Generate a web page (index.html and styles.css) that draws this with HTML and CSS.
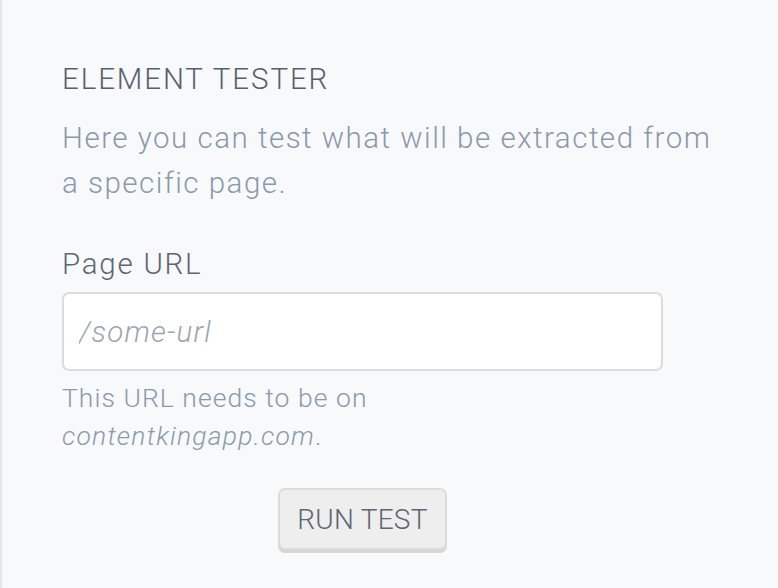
FILE: index.html
```html
<!DOCTYPE html>
<html>
<head>
<meta charset="utf-8">
<link rel="stylesheet" href="styles.css">
</head>
<body>
<div class="panel">
  <h2 class="title">ELEMENT TESTER</h2>
  <p class="desc">Here you can test what will be extracted from a specific page.</p>
  <label class="label" for="url">Page URL</label>
  <div class="field">
    <input id="url" class="input" type="text" placeholder="/some-url">
  </div>
  <p class="hint">This URL needs to be on<br><em>contentkingapp.com</em>.</p>
  <div class="actions">
    <button class="btn" type="button">RUN TEST</button>
  </div>
</div>
</body>
</html>
```

FILE: styles.css
```css
html, body {
  margin: 0;
  padding: 0;
  height: 100%;
}
body {
  background: #f8f9fb;
  font-family: Roboto, "Liberation Sans", sans-serif;
}
.panel {
  box-sizing: border-box;
  min-height: 100%;
  border-left: 2px solid #e6e7ea;
  padding: 59px 0 0 60px;
}
.title {
  margin: 0;
  font-size: 29.5px;
  font-weight: 300;
  line-height: 40px;
  letter-spacing: 1.9px;
  color: #56606d;
}
.desc {
  margin: 17px 0 0;
  width: 660px;
  font-size: 29.5px;
  font-weight: 300;
  line-height: 45px;
  letter-spacing: 1.5px;
  color: #8a99ab;
}
.label {
  display: block;
  margin-top: 38px;
  font-size: 29.5px;
  font-weight: 300;
  line-height: 40px;
  letter-spacing: 1.75px;
  color: #5d6672;
}
.field {
  margin-top: 8px;
  width: 601px;
}
.input {
  box-sizing: border-box;
  display: block;
  width: 100%;
  height: 79px;
  border: 2px solid #dcdcdc;
  border-radius: 7px;
  background: #fff;
  padding: 0 15px;
  font-family: Roboto, "Liberation Sans", sans-serif;
  font-size: 29.5px;
  font-weight: 300;
  letter-spacing: 1.2px;
  color: #5d6672;
  outline: none;
}
.input::placeholder {
  font-style: italic;
  color: #9aa5b3;
}
.hint {
  margin: 8px 0 0;
  font-size: 26.5px;
  font-weight: 300;
  line-height: 38px;
  letter-spacing: 1.05px;
  color: #8a99ab;
}
.hint em {
  font-style: italic;
  letter-spacing: 1.2px;
}
.actions {
  width: 601px;
  display: flex;
  justify-content: center;
  margin-top: 33px;
}
.btn {
  box-sizing: border-box;
  width: 169px;
  height: 62px;
  border: 2px solid #dcdcdc;
  border-radius: 7px;
  background: #eeeeee;
  box-shadow: 0 3px 0 #d6d6d6;
  font-family: Roboto, "Liberation Sans", sans-serif;
  font-size: 28px;
  font-weight: 300;
  letter-spacing: 0.25px;
  color: #5d6672;
  padding: 0;
}
```
